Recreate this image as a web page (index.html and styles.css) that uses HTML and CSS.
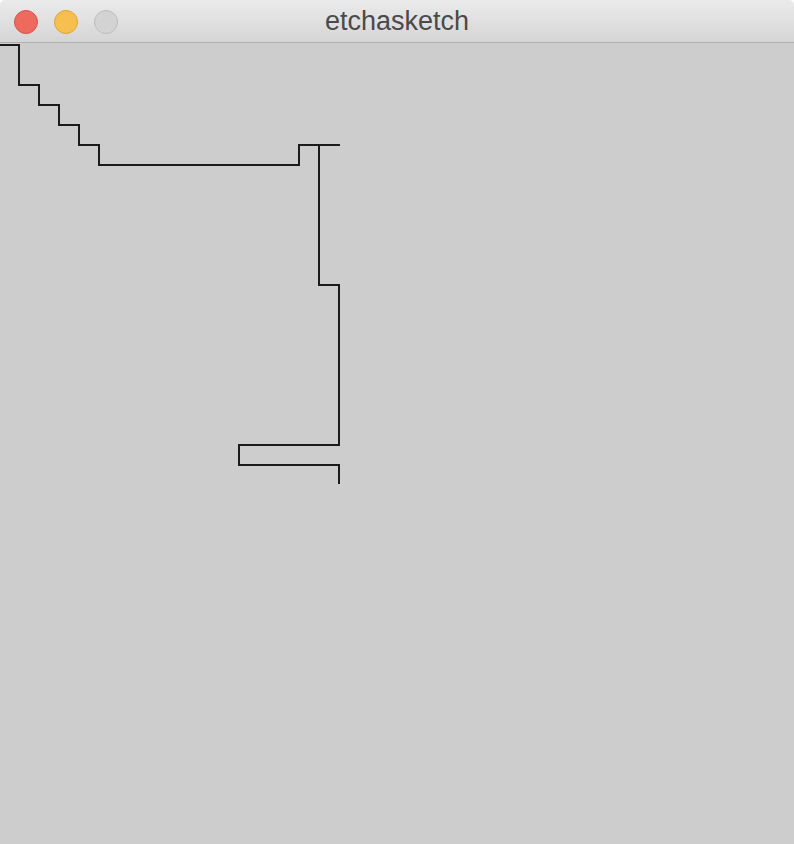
FILE: index.html
```html
<!DOCTYPE html>
<html>
<head>
<meta charset="utf-8">
<title>etchasketch</title>
<link rel="stylesheet" href="styles.css">
</head>
<body>
<div class="window">
  <div class="titlebar">
    <div class="lights">
      <span class="light red"></span>
      <span class="light yellow"></span>
      <span class="light gray"></span>
    </div>
    <div class="title">etchasketch</div>
  </div>
  <div class="canvas">
    <svg class="sketch" width="794" height="800" viewBox="0 43 794 800">
      <path d="M0 45 H19 V85 H39 V105 H59 V125 H79 V145 H99 V165 H299 V145 H340 M319 145 V285 H339 V445 H239 V465 H339 V484" fill="none" stroke="#1b1b1b" stroke-width="2" stroke-linejoin="miter" stroke-linecap="butt"/>
    </svg>
  </div>
</div>
</body>
</html>
```
FILE: styles.css
```css
html, body {
  margin: 0;
  padding: 0;
  background: #ffffff;
}
.window {
  width: 794px;
  height: 844px;
  display: flex;
  flex-direction: column;
  border-radius: 5px 5px 0 0;
  overflow: hidden;
}
.titlebar {
  height: 42px;
  flex: none;
  position: relative;
  display: flex;
  align-items: center;
  justify-content: center;
  background: linear-gradient(#ebebeb, #d5d5d5);
  border-bottom: 1px solid #b0b0b0;
}
.lights {
  position: absolute;
  left: 14px;
  top: 10px;
  display: flex;
  gap: 16px;
}
.light {
  width: 24px;
  height: 24px;
  border-radius: 50%;
  box-sizing: border-box;
}
.red { background: #ee6a5f; border: 1px solid #d8544a; }
.yellow { background: #f6bf4f; border: 1px solid #dea535; }
.gray { background: #d3d3d3; border: 1px solid #bdbdbd; }
.title {
  font-family: "Helvetica Neue", "Liberation Sans", Arial, sans-serif;
  font-size: 27px;
  color: #4a4a4a;
  margin-top: 1px;
}
.canvas {
  flex: 1;
  background: #cdcdcd;
  position: relative;
}
.sketch {
  display: block;
  position: absolute;
  left: 0;
  top: 0;
}
```
